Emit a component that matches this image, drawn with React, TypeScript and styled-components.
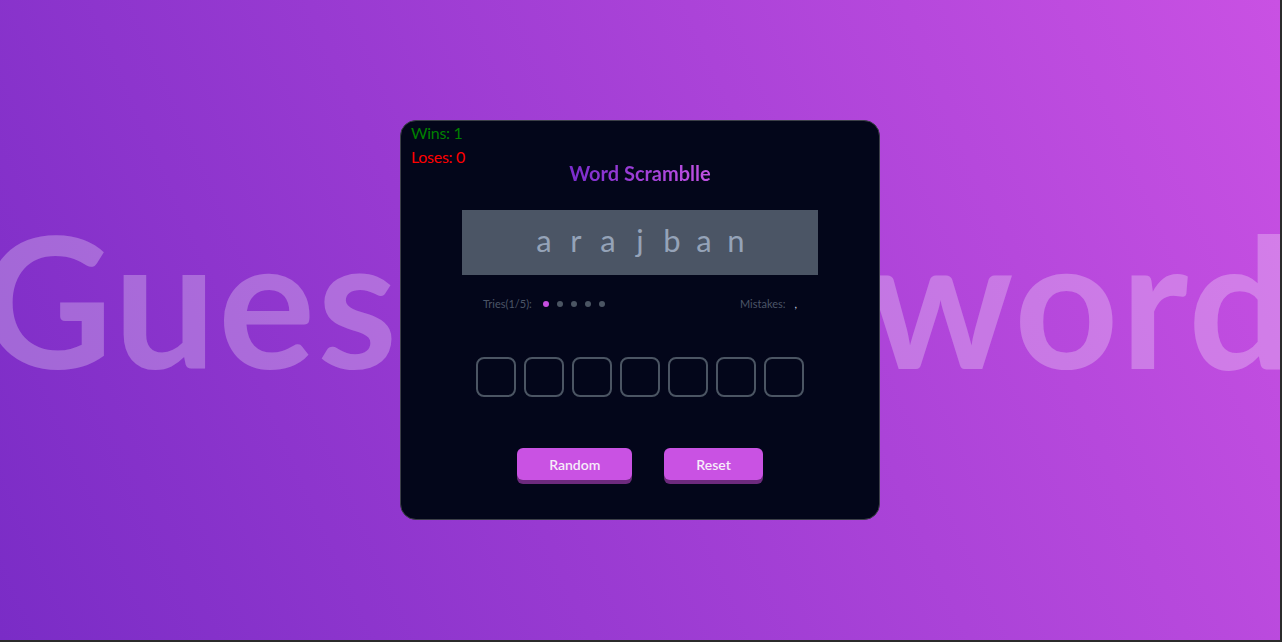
import React from "react";
import styled, { createGlobalStyle } from "styled-components";

const Global = createGlobalStyle`
  html, body { margin: 0; padding: 0; }
  body {
    background: #2b2b2b;
    font-family: "Lato", "Noto Sans", sans-serif;
    overflow: hidden;
  }
`;

const Page = styled.main`
  width: calc(100vw - 2px);
  height: calc(100vh - 2px);
  background: linear-gradient(66deg, #7a2cc6 0%, #c951e3 100%);
  display: grid;
  grid-template-columns: minmax(0, 1fr);
  grid-template-rows: minmax(0, 1fr);
  place-items: center;
  overflow: hidden;
`;

const BigText = styled.div`
  grid-area: 1 / 1;
  justify-self: center;
  font-family: "Lato", sans-serif;
  font-weight: 700;
  font-size: 182px;
  line-height: 1.2;
  white-space: nowrap;
  color: rgba(255, 255, 255, 0.27);
  letter-spacing: 2px;
  word-spacing: 12px;
  margin-bottom: 41px;
  margin-right: 6px;
  user-select: none;
`;

const Card = styled.section`
  grid-area: 1 / 1;
  z-index: 1;
  box-sizing: border-box;
  width: 480px;
  height: 400px;
  background: #03061a;
  border: 1px solid #3c4048;
  border-radius: 16px;
  padding: 0 10px;
  display: flex;
  flex-direction: column;
  align-items: center;
`;

const Header = styled.header`
  width: 100%;
  display: grid;
  grid-template-columns: 1fr auto 1fr;
`;

const Stats = styled.div`
  display: flex;
  flex-direction: column;
  font-size: 16px;
  line-height: 24px;
  letter-spacing: -0.3px;
`;

const Stat = styled.span<{ $color: string }>`
  color: ${(p) => p.$color};
`;

const Title = styled.h1`
  margin: 41px 0 0;
  font-size: 20px;
  line-height: 23px;
  font-weight: 700;
  background: linear-gradient(90deg, #7a2ccc, #c252e2);
  -webkit-background-clip: text;
  background-clip: text;
  color: transparent;
`;

const Scramble = styled.div`
  margin-top: 25px;
  width: 356px;
  height: 65px;
  background: #4b5565;
  display: flex;
  justify-content: center;
  align-items: center;
`;

const Letter = styled.span`
  width: 32px;
  text-align: center;
  font-size: 31px;
  font-weight: 400;
  color: #95a3b8;
  line-height: 1;
  padding-bottom: 4px;
`;

const TriesRow = styled.div`
  margin-top: 21px;
  box-sizing: border-box;
  width: 356px;
  padding: 0 21px;
  display: flex;
  justify-content: space-between;
  align-items: center;
  font-size: 11px;
  line-height: 15px;
  color: #4b5567;
`;

const Group = styled.div`
  display: flex;
  align-items: center;
`;

const Dots = styled.div`
  display: flex;
  gap: 8px;
  margin-left: 11px;
`;

const Dot = styled.span<{ $active?: boolean }>`
  width: 6px;
  height: 6px;
  border-radius: 50%;
  background: ${(p) => (p.$active ? "#c64fe0" : "#4b5563")};
`;

const Comma = styled.span`
  margin-left: 9px;
  color: #cbd5e1;
`;

const Inputs = styled.div`
  margin-top: 46px;
  display: flex;
  gap: 8px;
`;

const Box = styled.input`
  box-sizing: border-box;
  width: 40px;
  height: 40px;
  border: 2px solid #4b5563;
  border-radius: 8px;
  background: transparent;
  outline: none;
  color: #e2e8f0;
  text-align: center;
  font: inherit;
`;

const Buttons = styled.div`
  margin-top: 51px;
  display: flex;
  gap: 32px;
`;

const Button = styled.button`
  height: 32px;
  padding: 0 32px;
  border: none;
  border-radius: 6px;
  background: #c952e3;
  box-shadow: 0 4px 0 #6d2a7e;
  color: #f7ecfa;
  font-family: "Lato", sans-serif;
  font-size: 14px;
  font-weight: 600;
  cursor: pointer;
`;

export default function App() {
  const letters = "arajban".split("");
  return (
    <>
      <Global />
      <Page>
        <BigText>Guess the word</BigText>
        <Card>
          <Header>
            <Stats>
              <Stat $color="#008000">Wins: 1</Stat>
              <Stat $color="#ff0000">Loses: 0</Stat>
            </Stats>
            <Title>Word Scramblle</Title>
            <div />
          </Header>
          <Scramble>
            {letters.map((l, i) => (
              <Letter key={i}>{l}</Letter>
            ))}
          </Scramble>
          <TriesRow>
            <Group>
              <span>Tries(1/5):</span>
              <Dots>
                {[0, 1, 2, 3, 4].map((i) => (
                  <Dot key={i} $active={i === 0} />
                ))}
              </Dots>
            </Group>
            <Group>
              <span>Mistakes:</span>
              <Comma>,</Comma>
            </Group>
          </TriesRow>
          <Inputs>
            {letters.map((_, i) => (
              <Box key={i} maxLength={1} />
            ))}
          </Inputs>
          <Buttons>
            <Button>Random</Button>
            <Button>Reset</Button>
          </Buttons>
        </Card>
      </Page>
    </>
  );
}
